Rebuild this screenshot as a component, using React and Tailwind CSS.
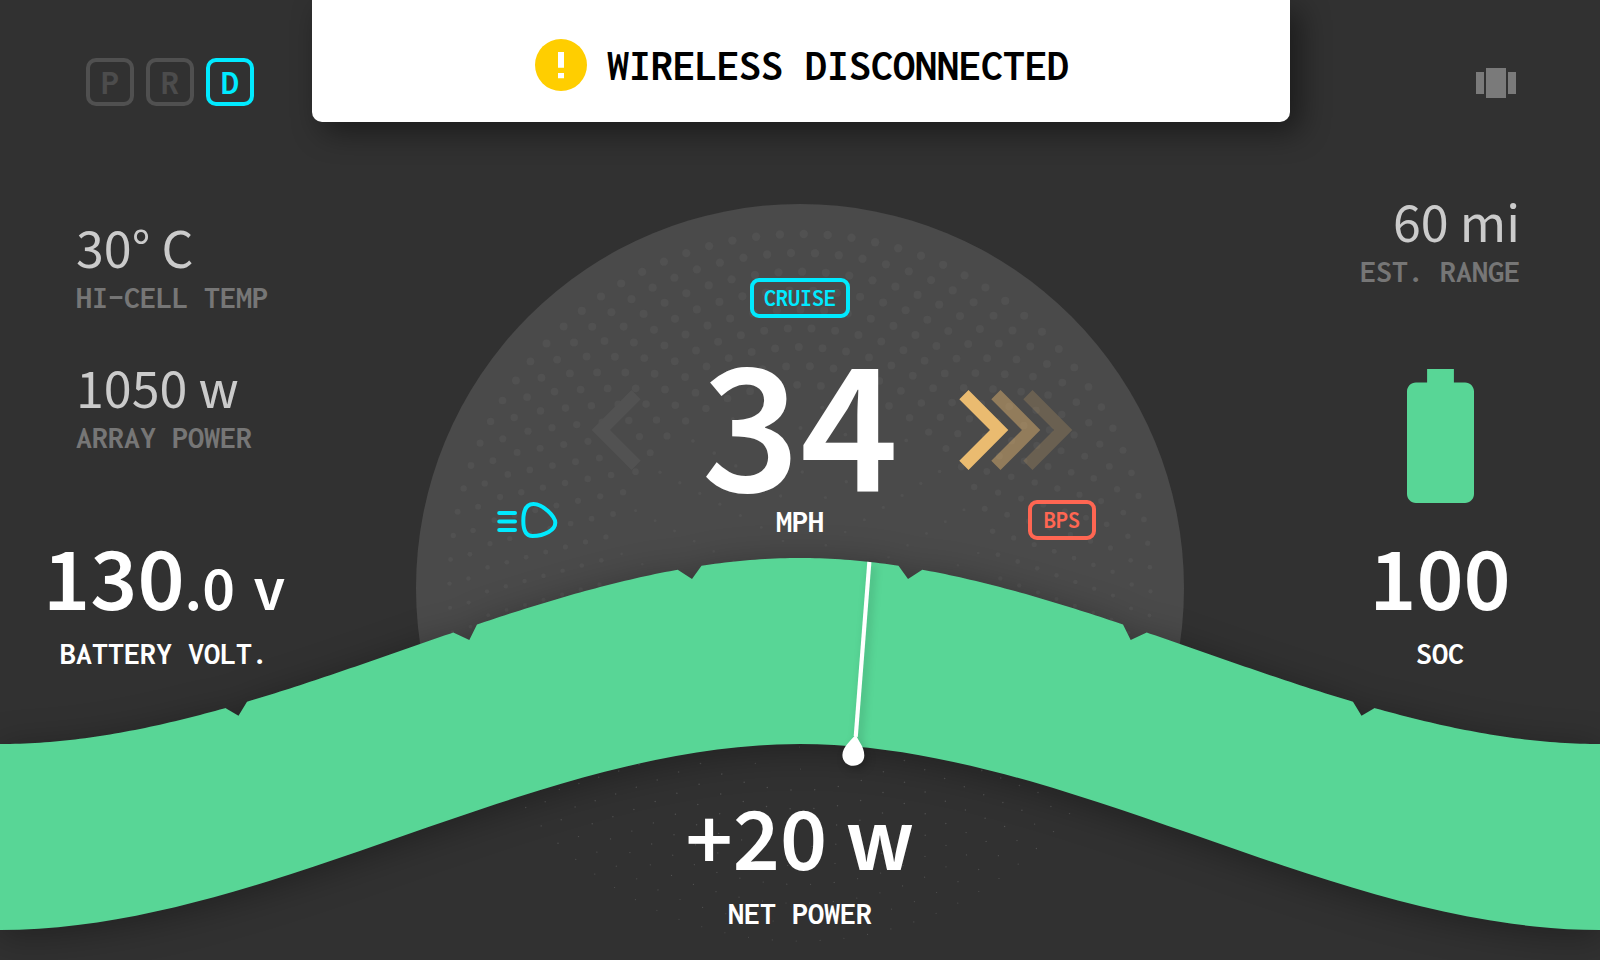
const WAVE = 186;
const NOTCHES = [
  [225.3, 238.5, 715.7, 247],
  [453.3, 469.3, 640, 477],
  [677.7, 692, 579, 701.5],
];

// Height of the upper edge of the band at a given x.
function crest(x) {
  const t = (x > 800 ? 1600 - x : x) / 800;
  return 744 - WAVE * (3 * t * t - 2 * t * t * t);
}

function bandPath() {
  const notches = [
    ...NOTCHES,
    ...[...NOTCHES].reverse().map(([a, b, y, c]) => [1600 - c, 1600 - b, y, 1600 - a]),
  ];
  const top = [];
  for (let x = 0; x <= 1600; x += 5) {
    if (!notches.some(([a, , , c]) => x >= a && x <= c)) top.push([x, crest(x)]);
  }
  notches.forEach(([a, b, y, c]) => top.push([a, crest(a)], [b, y], [c, crest(c)]));
  top.sort((p, q) => p[0] - q[0]);
  const line = top.map(([x, y]) => `${x} ${y.toFixed(2)}`).join(" L");
  return `M${line} L1600 930 C1333.3 930 1066.7 744 800 744 C533.3 744 266.7 930 0 930 Z`;
}

const SIZES = [[200, 4.3], [390, 3.9], [460, 3.5], [510, 3], [560, 2.4], [600, 2.1], [700, 1.2], [760, 0.8], [960, 0.5]];
function dotSize(y) {
  const i = Math.max(1, SIZES.findIndex(([sy]) => sy >= y));
  const [y0, r0] = SIZES[i - 1];
  const [y1, r1] = SIZES[i];
  return r0 + ((r1 - r0) * (y - y0)) / (y1 - y0);
}

function ring(out, rx, ry, n, phase, scale) {
  for (let j = 0; j < n; j++) {
    const a = ((j + phase) * 2 * Math.PI) / n;
    const x = 800 + rx * Math.sin(a);
    const y = 587.5 - ry * Math.cos(a);
    out.push([x, y, Math.max(0.55, dotSize(y) * scale)]);
  }
}

function dots() {
  const out = [];
  for (let k = 0; k < 9; k++) {
    ring(out, 350.5 - 18.75 * k, 353.5 - 18.85 * k, Math.round(92.4 - 4.934 * k), 0.16 + 0.465 * k, 1);
  }
  for (let k = 0; k < 8; k++) {
    ring(out, 181.5 - 22 * k, 181.5 - 22 * k, 25 - 3 * k, 0.49 + 0.52 * k, 0.52);
  }
  return out;
}

function Backdrop() {
  return (
    <svg className="absolute inset-0" width="1600" height="960" viewBox="0 0 1600 960" aria-hidden="true">
      <circle cx="800" cy="588" r="384" fill="#4a4a4a" clipPath="url(#above)" />
      <clipPath id="above">
        <rect width="1600" height="720" />
      </clipPath>
      <g fill="#515151">
        {dots().map(([x, y, r], i) => (
          <circle key={i} cx={x.toFixed(1)} cy={y.toFixed(1)} r={r.toFixed(2)} />
        ))}
      </g>
      <path className="drop-shadow-[0_6px_18px_rgba(0,0,0,0.33)]" d={bandPath()} fill="#58d696" />
      <g className="drop-shadow-[3px_4px_4px_rgba(0,0,0,0.2)]" fill="#fff">
        <path d="M867.3 561.8 L871.4 562.2 L857.8 737 L853.7 736 Z" />
        <path d="M855.9 734 C857 740 864.4 746 864.3 755.5 C864.2 761.5 859.5 765.8 853.3 765.8 C847 765.8 842.3 761 842.4 755 C842.6 746.5 851.5 740.5 855.9 734 Z" />
      </g>
    </svg>
  );
}

function Value({ children, className = "" }) {
  return (
    <div className={`font-['Source_Sans_3','Source_Sans_Pro','Noto_Sans_CJK_SC',sans-serif] whitespace-pre ${className}`}>
      {children}
    </div>
  );
}

function Label({ children, className = "" }) {
  return (
    <div className={`font-['Inconsolata','Noto_Sans_Mono_CJK_SC',monospace] whitespace-pre text-[32px] leading-[40px] ${className}`}>
      {children}
    </div>
  );
}

function Gear({ name, active }) {
  return (
    <div className={`flex size-12 items-center justify-center rounded-[10px] border-4 font-['Inconsolata','Noto_Sans_Mono_CJK_SC',monospace] text-[36px] leading-none font-bold ${active ? "border-[#00eaff] text-[#00eaff]" : "border-[#505050] text-[#4c4c4c]"}`}>
      {name}
    </div>
  );
}

function Badge({ children, className = "" }) {
  return (
    <div className={`flex h-10 items-center justify-center rounded-[9px] border-4 font-['Inconsolata','Noto_Sans_Mono_CJK_SC',monospace] text-[24px] leading-none font-bold ${className}`}>
      {children}
    </div>
  );
}

function Metric({ value, label, className = "" }) {
  return (
    <div className={className}>
      <Value className="h-[62px] pt-[5px] text-[56px] leading-[60px] text-[#cbcbcb]">{value}</Value>
      <Label className="font-bold text-[#767676]">{label}</Label>
    </div>
  );
}

function Chevrons() {
  return (
    <svg width="114" height="80" viewBox="0 0 114 80" fill="#eabb70">
      {[1, 0.45, 0.2].map((o, i) => (
        <path key={o} fillOpacity={o} transform={`translate(${i * 32} 0)`} d="M9.5 0 L49.3 40 L9.5 80 L.3 70.8 L31 40 L.3 9.2 Z" />
      ))}
    </svg>
  );
}

function Alert() {
  return (
    <div className="absolute top-0 left-[312px] flex h-[122px] w-[978px] justify-center rounded-b-[10px] bg-white pt-[39px] pl-0.5 shadow-[10px_10px_30px_rgba(0,0,0,0.45)]">
      <svg className="mr-5 shrink-0" width="52" height="52" viewBox="0 0 52 52">
        <circle cx="26" cy="26" r="26" fill="#ffce00" />
        <path d="M23 13h6v15.7h-6zM23 34h6v5.2h-6z" fill="#fff" />
      </svg>
      <div className="font-['Inconsolata','Noto_Sans_Mono_CJK_SC',monospace] text-[44px] leading-[52px] font-bold text-black">
        WIRELESS DISCONNECTED
      </div>
    </div>
  );
}

export default function App() {
  return (
    <div className="relative h-[960px] w-[1600px] overflow-hidden bg-[#313131]">
      <Backdrop />
      <main className="relative flex h-full justify-between">
        <section className="flex w-[320px] flex-col pt-[58px]">
          <div className="flex gap-3 pl-[86px]">
            <Gear name="P" />
            <Gear name="R" />
            <Gear name="D" active />
          </div>
          <Metric
            className="mt-[110px] pl-[76px]"
            value="30° C"
            label={<>HI<span className="inline-block scale-x-[1.35]">-</span>CELL TEMP</>}
          />
          <Metric className="mt-[38px] pl-[76px]" value="1050 w" label="ARRAY POWER" />
          <Value className="mt-[74px] h-[100px] pl-[43px] text-[92px] leading-[100px] font-semibold text-white">
            130<span className="text-[64px] leading-none">.0</span> <span className="text-[64px] leading-none">v</span>
          </Value>
          <Label className="mt-[2px] pl-[60px] font-bold text-white">BATTERY VOLT.</Label>
        </section>

        <section className="flex w-[640px] flex-col items-center pt-[278px]">
          <Badge className="w-[100px] border-[#00eaff] text-[#00eaff]">CRUISE</Badge>
          <div className="mt-[21px] grid h-[161px] grid-cols-[210px_220px_210px]">
            <svg className="mt-[51px] ml-[111px]" width="50" height="80" viewBox="0 0 50 80" fill="#525252">
              <path d="M40.5 0 L.7 40 L40.5 80 L49.7 70.8 L19 40 L49.7 9.2 Z" />
            </svg>
            <Value className="mt-[13px] h-[148px] text-center text-[192px] leading-[160px] font-semibold text-white">34</Value>
            <div className="mt-[51px] ml-[49px]">
              <Chevrons />
            </div>
          </div>
          <div className="grid h-10 w-full grid-cols-[1fr_auto_1fr] pr-6 pl-4">
            <svg className="mt-[2px]" width="64" height="36" viewBox="496 502 64 36" fill="none" stroke="#00eaff" strokeWidth="4">
              <path strokeLinecap="round" d="M499.2 513H515M499.2 521.5H515M499.2 530H515" />
              <path d="M533.5 504 C543 504 555.3 516.5 555.3 522.8 C555.3 530 545 536 532.5 536 C525 536 523.3 528 523.3 521 C523.3 512 525 504 533.5 504 Z" />
            </svg>
            <Label className="ml-2 pt-0.5 font-bold text-white">MPH</Label>
            <Badge className="w-[68px] justify-self-end border-[#ff6652] text-[#ff6652]">BPS</Badge>
          </div>
          <Value className="mt-[252px] text-[92px] leading-[100px] font-semibold text-white">+20 w</Value>
          <Label className="mt-[2px] font-bold text-white">NET POWER</Label>
        </section>

        <section className="flex w-[320px] flex-col items-center pt-[68px]">
          <svg className="mr-[84px] self-end" width="40" height="30" viewBox="0 0 40 30" fill="#7a7a7a">
            <path d="M0 4h8v22H0zM10 0h20v30H10zM32 4h8v22h-8z" />
          </svg>
          <Metric className="mt-[92px] self-end pr-[80px] text-right" value="60 mi" label="EST. RANGE" />
          <svg className="mt-[77px]" width="67" height="134" viewBox="7 2 10 20" fill="#58d696">
            <path d="M15.67 4H14V2h-4v2H8.33C7.6 4 7 4.6 7 5.33v15.33C7 21.4 7.6 22 8.33 22h7.33c.74 0 1.34-.6 1.34-1.33V5.33C17 4.6 16.4 4 15.67 4z" />
          </svg>
          <Value className="mt-[29px] text-[92px] leading-[100px] font-semibold text-white">100</Value>
          <Label className="mt-[2px] font-bold text-white">SOC</Label>
        </section>
      </main>
      <Alert />
    </div>
  );
}
